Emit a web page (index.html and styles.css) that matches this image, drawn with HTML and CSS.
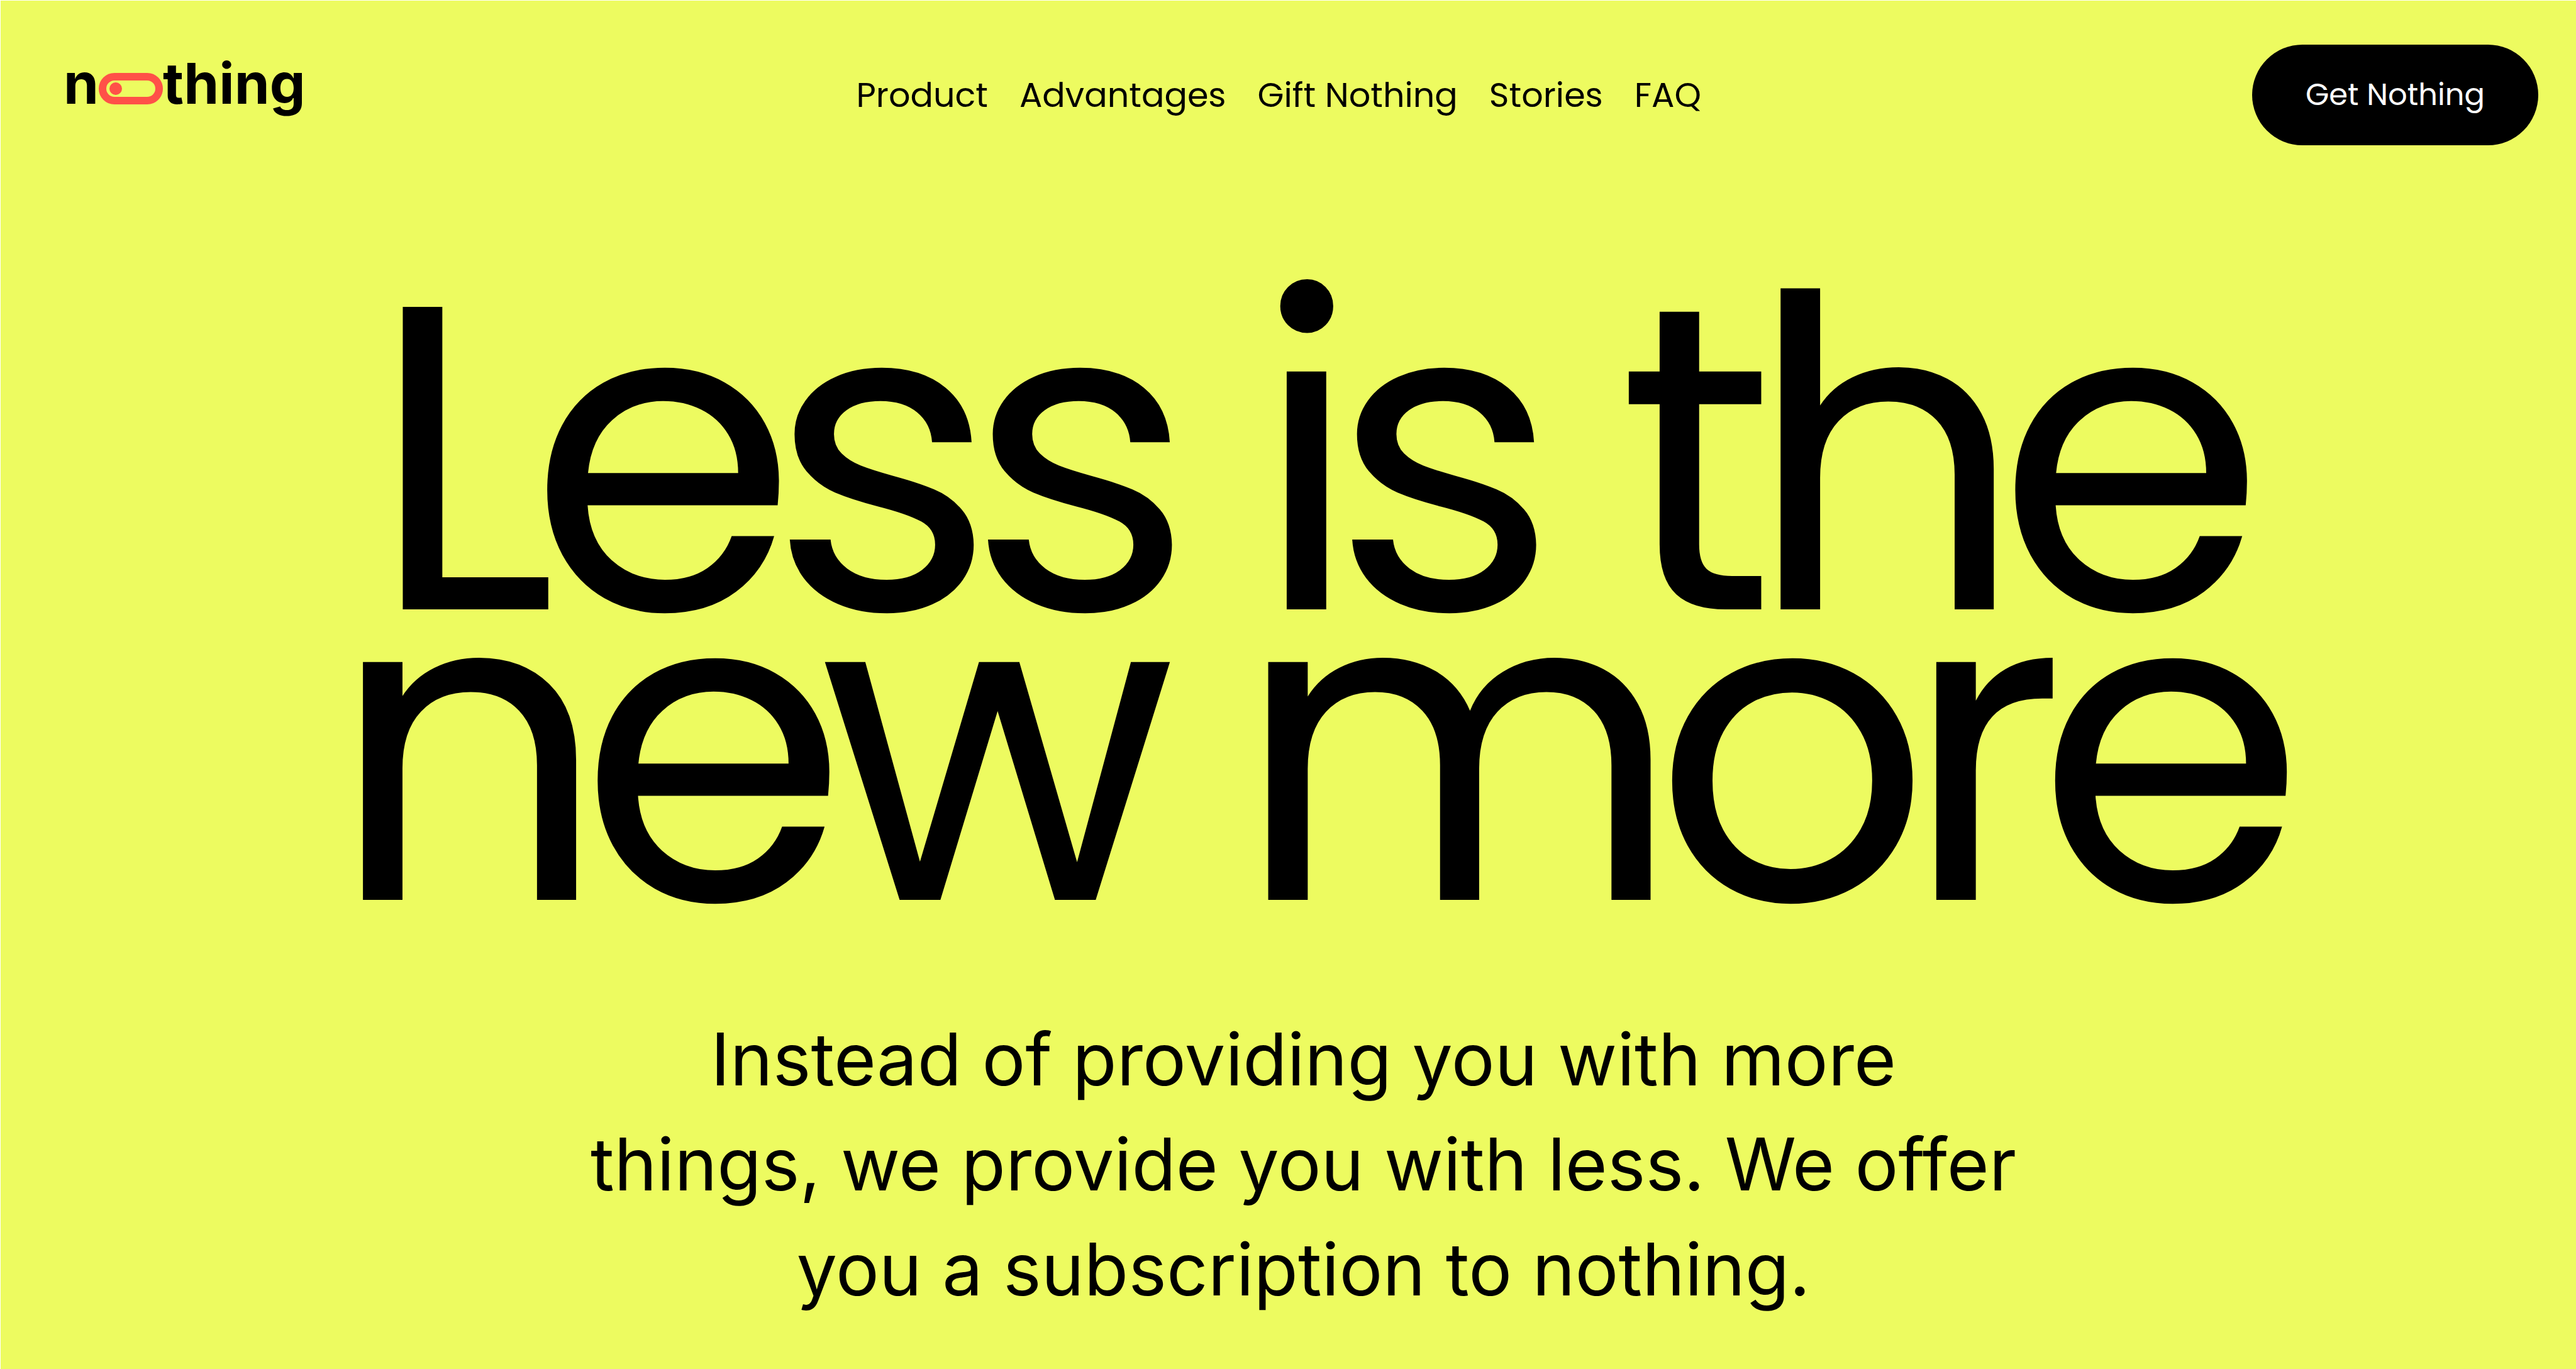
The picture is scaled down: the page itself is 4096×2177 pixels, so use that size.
FILE: index.html
```html
<!DOCTYPE html>
<html lang="en">
<head>
<meta charset="utf-8">
<title>Nothing</title>
<link rel="stylesheet" href="styles.css">
</head>
<body>
<div class="page">
  <header class="header">
    <a class="logo" href="#" aria-label="nothing">
      <span>n</span>
      <svg class="logo-pill" viewBox="0 0 102 50" aria-hidden="true">
        <rect x="6" y="6" width="90" height="38" rx="19" fill="none" stroke="#ff5148" stroke-width="12"/>
        <circle cx="27" cy="25" r="10" fill="#ff5148"/>
      </svg>
      <span>thing</span>
    </a>
    <nav class="nav">
      <a href="#">Product</a>
      <a href="#">Advantages</a>
      <a href="#">Gift Nothing</a>
      <a href="#">Stories</a>
      <a href="#">FAQ</a>
    </nav>
    <button class="cta" type="button">Get Nothing</button>
  </header>
  <main class="hero">
    <h1 class="title">Less is the<br>new more</h1>
    <p class="lead">Instead of providing you with more<br>things, we provide you with less. We offer<br>you a subscription to nothing.</p>
  </main>
</div>
</body>
</html>
```
FILE: styles.css
```css
* {
  box-sizing: border-box;
}

body {
  margin: 0;
  font-family: Poppins, Inter, "Liberation Sans", sans-serif;
  color: #000;
  background: #edfb60;
}

.page {
  min-height: 100vh;
  border-top: 1px solid #fff;
  border-left: 1px solid #fff;
}

.header {
  display: flex;
  justify-content: space-between;
  align-items: center;
  padding: 70px 60px 0 100px;
}

.logo {
  display: flex;
  align-items: center;
  color: #000;
  font-family: Inter, sans-serif;
  font-size: 90px;
  font-weight: 700;
  line-height: 100px;
  text-decoration: none;
  padding-bottom: 36px;
}

.logo-pill {
  width: 102px;
  height: 50px;
  margin-top: 16px;
}

.nav {
  display: flex;
  gap: 50px;
  font-size: 54px;
  line-height: 80px;
}

.nav a {
  color: #000;
  text-decoration: none;
}

.cta {
  height: 160px;
  padding: 0 85px;
  border: 0;
  border-radius: 80px;
  background: #000;
  color: #fff;
  font-family: inherit;
  font-size: 48px;
}

.hero {
  padding-left: 48px;
  text-align: center;
}

.title {
  margin: 266px 0 0;
  font-size: 690px;
  font-weight: 400;
  line-height: 462px;
  letter-spacing: -45px;
}

.lead {
  margin: 180px 0 0;
  font-family: Inter, sans-serif;
  font-size: 115px;
  line-height: 167px;
}
```
